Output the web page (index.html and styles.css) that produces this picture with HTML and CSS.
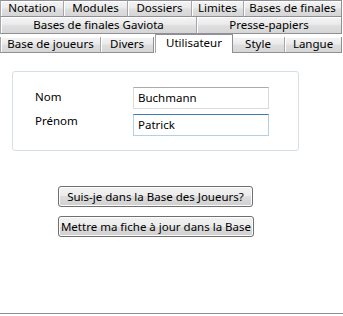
FILE: index.html
```html
<!DOCTYPE html>
<html lang="fr">
<head>
<meta charset="utf-8">
<link rel="stylesheet" href="styles.css">
</head>
<body>
<div class="dialog">
  <div class="tabs">
    <div class="row row1">
      <div class="tab">Notation</div>
      <div class="tab">Modules</div>
      <div class="tab">Dossiers</div>
      <div class="tab">Limites</div>
      <div class="tab">Bases de finales</div>
    </div>
    <div class="row row2">
      <div class="tab">Bases de finales Gaviota</div>
      <div class="tab">Presse-papiers</div>
    </div>
    <div class="row row3">
      <div class="tab">Base de joueurs</div>
      <div class="tab">Divers</div>
      <div class="tab active">Utilisateur</div>
      <div class="tab">Style</div>
      <div class="tab">Langue</div>
    </div>
  </div>
  <div class="panel">
    <div class="group">
      <div class="field">
        <span class="label">Nom</span>
        <span class="input">Buchmann</span>
      </div>
      <div class="field">
        <span class="label">Prénom</span>
        <span class="input focused">Patrick</span>
      </div>
    </div>
    <div class="buttons">
      <div class="btn">Suis-je dans la Base des Joueurs?</div>
      <div class="btn">Mettre ma fiche à jour dans la Base</div>
    </div>
  </div>
</div>
</body>
</html>
```
FILE: styles.css
```css
html, body {
  margin: 0;
  padding: 0;
  background: #ffffff;
}
body {
  font-family: "Noto Sans", "Open Sans", sans-serif;
  font-size: 11.5px;
  color: #000;
  width: 343px;
  height: 316px;
  overflow: hidden;
}
.dialog {
  display: flex;
  flex-direction: column;
  width: 343px;
}
.tabs {
  display: flex;
  flex-direction: column;
  width: 341px;
}
.row {
  display: grid;
  height: 17px;
}
.row1 { grid-template-columns: 63px 64px 64px 52px 98px; }
.row2 { grid-template-columns: 196px 145px; }
.row3 {
  grid-template-columns: 100px 53px 78px 53px 57px;
  height: 18px;
  align-items: end;
}
.tab {
  box-sizing: border-box;
  height: 17px;
  border: 1px solid #8e9096;
  border-left-color: #a4a6aa;
  margin-right: -1px;
  background: linear-gradient(#f4f4f4, #ebebeb 45%, #dedede 55%, #d6d6d6);
  box-shadow: inset 1px 1px 0 #ffffff;
  display: flex;
  align-items: center;
  justify-content: center;
  line-height: 1;
  white-space: nowrap;
  padding-bottom: 1px;
}
.row + .row .tab { border-top: none; }
.row3 .tab { height: 16px; }
.row3 .tab.active {
  height: 19px;
  background: #ffffff;
  box-shadow: none;
  border-bottom: none;
  border-top: 1px solid #8e9096;
  margin-left: 2px;
  margin-right: -2px;
  padding-bottom: 2px;
  position: relative;
  z-index: 1;
}
.panel {
  box-sizing: border-box;
  height: 262px;
  border-bottom: 1px solid #8a8e96;
  display: flex;
  flex-direction: column;
  padding: 19px 0 0 12px;
}
.group {
  box-sizing: border-box;
  width: 287px;
  height: 80px;
  border: 1px solid #d5dfe5;
  border-radius: 3px;
  padding: 15px 0 0 22px;
  display: flex;
  flex-direction: column;
  gap: 5px;
}
.field {
  display: grid;
  grid-template-columns: 98px 136px;
  height: 22px;
}
.label {
  padding-top: 2px;
}
.field + .field .label {
  padding-top: 0;
  margin-top: -1px;
}
.input {
  box-sizing: border-box;
  height: 22px;
  border: 1px solid #dadada;
  border-top-color: #ababab;
  padding: 0 0 1px 4px;
  display: flex;
  align-items: center;
}
.input.focused {
  border-color: #b5d0e6;
  border-top-color: #3d7bad;
}
.buttons {
  display: flex;
  flex-direction: column;
  align-items: flex-start;
  gap: 9px;
  padding: 35px 0 0 46px;
}
.btn {
  box-sizing: border-box;
  height: 21px;
  border: 1px solid #707070;
  border-radius: 3px;
  background: linear-gradient(#f2f2f2, #ebebeb 50%, #dddddd 50%, #cfcfcf);
  box-shadow: inset 0 0 0 1px #fcfcfc;
  display: flex;
  align-items: center;
  justify-content: center;
  padding: 0 0 1px;
  white-space: nowrap;
}
.btn:first-child { width: 195px; }
.btn:last-child { width: 196px; }
```
